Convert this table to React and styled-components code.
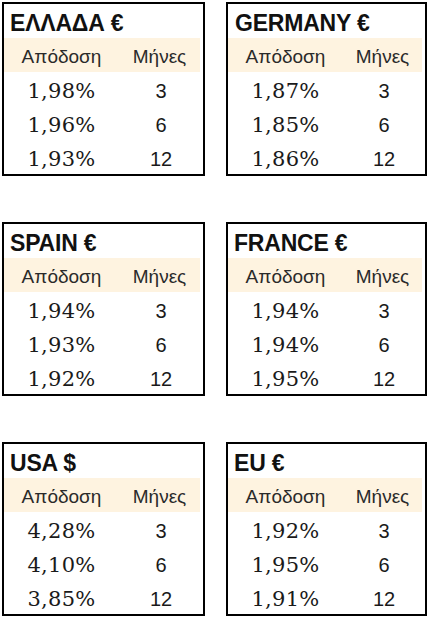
import React from "react";
import styled, { createGlobalStyle } from "styled-components";

const Global = createGlobalStyle`
  html, body { margin: 0; padding: 0; background: #ffffff; }
  body { font-family: "Liberation Sans", Arial, sans-serif; }
`;

const Page = styled.div`
  display: grid;
  grid-template-columns: 203px 201px;
  column-gap: 21px;
  row-gap: 46px;
  padding: 2px 0 0 2px;
`;

const Card = styled.div`
  border: 2px solid #000;
  display: flex;
  flex-direction: column;
  background: #fff;
`;

const Title = styled.div`
  height: 29px;
  padding: 5px 0 0 ${(p) => p.$indent}px;
  line-height: 29px;
  font-family: "Liberation Sans", Arial, sans-serif;
  font-weight: 700;
  font-size: 23px;
  color: #111;
  letter-spacing: -0.2px;
  white-space: nowrap;
`;

const Row = styled.div`
  display: grid;
  grid-template-columns: 115px 1fr;
  height: 30px;
  padding-top: 4px;
  line-height: 30px;
`;

const HeaderRow = styled(Row)`
  background: #fef3e0;
  margin-right: 3px;
  font-family: "Liberation Sans", Arial, sans-serif;
  font-size: 19px;
  color: #2a2a2a;
`;

const Cell = styled.div`
  text-align: center;
  white-space: nowrap;
`;

const Value = styled(Cell)`
  font-family: "DejaVu Serif", "Liberation Serif", serif;
  font-variant-numeric: oldstyle-nums;
  font-size: 21px;
  color: #1a1a1a;
  letter-spacing: 0.3px;
`;

const Months = styled(Cell)`
  font-family: "Liberation Sans", Arial, sans-serif;
  font-size: 20px;
  color: #1a1a1a;
`;

const tables = [
  { title: "ΕΛΛΑΔΑ €", indent: 6, values: ["1,98%", "1,96%", "1,93%"] },
  { title: "GERMANY €", indent: 7, values: ["1,87%", "1,85%", "1,86%"] },
  { title: "SPAIN €", indent: 6, values: ["1,94%", "1,93%", "1,92%"] },
  { title: "FRANCE €", indent: 6, values: ["1,94%", "1,94%", "1,95%"] },
  { title: "USA $", indent: 6, values: ["4,28%", "4,10%", "3,85%"] },
  { title: "EU €", indent: 6, values: ["1,92%", "1,95%", "1,91%"] },
];

const months = ["3", "6", "12"];

function YieldTable({ title, indent, values }) {
  return (
    <Card>
      <Title $indent={indent}>{title}</Title>
      <HeaderRow>
        <Cell>Απόδοση</Cell>
        <Cell>Μήνες</Cell>
      </HeaderRow>
      {values.map((v, i) => (
        <Row key={i}>
          <Value>{v}</Value>
          <Months>{months[i]}</Months>
        </Row>
      ))}
    </Card>
  );
}

export default function App() {
  return (
    <>
      <Global />
      <Page>
        {tables.map((t) => (
          <YieldTable key={t.title} {...t} />
        ))}
      </Page>
    </>
  );
}
